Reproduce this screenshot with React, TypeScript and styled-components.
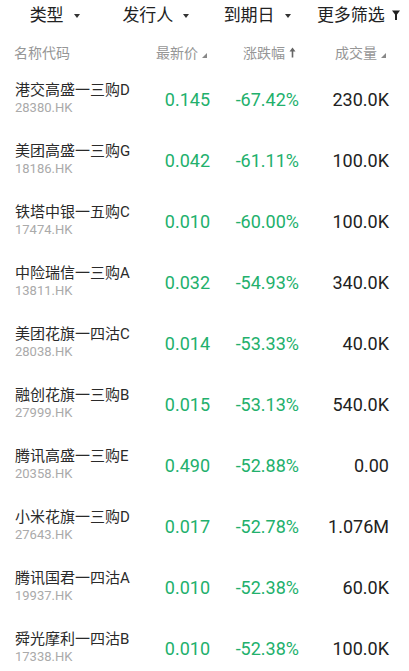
import styled, { createGlobalStyle } from 'styled-components'

interface Bond {
  name: string
  code: string
  price: string
  change: string
  volume: string
}

const BONDS: Bond[] = [
  { name: '港交高盛一三购D', code: '28380.HK', price: '0.145', change: '-67.42%', volume: '230.0K' },
  { name: '美团高盛一三购G', code: '18186.HK', price: '0.042', change: '-61.11%', volume: '100.0K' },
  { name: '铁塔中银一五购C', code: '17474.HK', price: '0.010', change: '-60.00%', volume: '100.0K' },
  { name: '中险瑞信一三购A', code: '13811.HK', price: '0.032', change: '-54.93%', volume: '340.0K' },
  { name: '美团花旗一四沽C', code: '28038.HK', price: '0.014', change: '-53.33%', volume: '40.0K' },
  { name: '融创花旗一三购B', code: '27999.HK', price: '0.015', change: '-53.13%', volume: '540.0K' },
  { name: '腾讯高盛一三购E', code: '20358.HK', price: '0.490', change: '-52.88%', volume: '0.00' },
  { name: '小米花旗一三购D', code: '27643.HK', price: '0.017', change: '-52.78%', volume: '1.076M' },
  { name: '腾讯国君一四沽A', code: '19937.HK', price: '0.010', change: '-52.38%', volume: '60.0K' },
  { name: '舜光摩利一四沽B', code: '17338.HK', price: '0.010', change: '-52.38%', volume: '100.0K' },
]

const FILTERS = ['类型', '发行人', '到期日']

const GlobalStyle = createGlobalStyle`
  html, body {
    margin: 0;
    padding: 0;
    background: #fff;
    overflow: hidden;
  }
  body {
    font-family: Roboto, 'Noto Sans CJK SC', sans-serif;
    -webkit-font-smoothing: antialiased;
  }
`

const Page = styled.div`
  width: 409px;
  height: 671px;
  overflow: hidden;
  background: #fff;
`

const FilterBar = styled.div`
  display: grid;
  grid-template-columns: repeat(4, 1fr);
  height: 31px;
  padding-left: 4px;
  align-items: center;
`

const FilterItem = styled.div<{ $gap?: number }>`
  display: flex;
  align-items: center;
  justify-content: center;
  gap: ${p => p.$gap ?? 10}px;
  font-size: 17px;
  color: #222;
  line-height: 1;
`

const Caret = styled.span`
  width: 0;
  height: 0;
  border-left: 3px solid transparent;
  border-right: 3px solid transparent;
  border-top: 4px solid #333;
`

const grid = `
  display: grid;
  grid-template-columns: 1fr 60px 89px 90px;
  padding: 0 20px 0 15px;
`

const HeaderRow = styled.div`
  ${grid}
  height: 42px;
  align-items: center;
  font-size: 14px;
  color: #969696;
`

const HeaderCell = styled.div<{ $right?: boolean }>`
  display: flex;
  align-items: center;
  justify-content: ${p => (p.$right ? 'flex-end' : 'flex-start')};
  gap: 4px;
  padding-right: ${p => (p.$right ? '3px' : '0')};
  margin-left: ${p => (p.$right ? '0' : '-1px')};
`

const SortCorner = styled.span`
  width: 0;
  height: 0;
  margin-top: 6px;
  border-left: 5px solid transparent;
  border-bottom: 5px solid #888;
`

const Row = styled.div`
  ${grid}
  height: 61px;
  align-items: start;
`

const NameCell = styled.div`
  display: flex;
  flex-direction: column;
  padding-top: 7px;
  white-space: nowrap;
`

const Name = styled.span`
  font-size: 15px;
  line-height: 20px;
  color: #2a2a2a;
`

const Code = styled.span`
  font-size: 13px;
  line-height: 15px;
  color: #aaa;
`

const Value = styled.div<{ $green?: boolean }>`
  text-align: right;
  font-size: 18px;
  line-height: 18px;
  padding-top: 18px;
  white-space: nowrap;
  color: ${p => (p.$green ? '#22b06c' : '#222')};
`

const UpArrow = () => (
  <svg width="7" height="11" viewBox="0 0 7 11">
    <path d="M3.5 0.5 L6.5 4.5 H4.3 V10.5 H2.7 V4.5 H0.5 Z" fill="#666" />
  </svg>
)

const Funnel = () => (
  <svg width="8" height="11" viewBox="0 0 8 11">
    <path d="M0 0.5 H8 L5 4.5 V10 H3 V4.5 Z" fill="#222" />
  </svg>
)

export default function App() {
  return (
    <Page>
      <GlobalStyle />
      <FilterBar>
        {FILTERS.map(f => (
          <FilterItem key={f}>
            {f}
            <Caret />
          </FilterItem>
        ))}
        <FilterItem $gap={7}>
          更多筛选
          <Funnel />
        </FilterItem>
      </FilterBar>
      <HeaderRow>
        <HeaderCell>名称代码</HeaderCell>
        <HeaderCell $right>
          最新价
          <SortCorner />
        </HeaderCell>
        <HeaderCell $right>
          涨跌幅
          <UpArrow />
        </HeaderCell>
        <HeaderCell $right>
          成交量
          <SortCorner />
        </HeaderCell>
      </HeaderRow>
      {BONDS.map(b => (
        <Row key={b.code}>
          <NameCell>
            <Name>{b.name}</Name>
            <Code>{b.code}</Code>
          </NameCell>
          <Value $green>{b.price}</Value>
          <Value $green>{b.change}</Value>
          <Value>{b.volume}</Value>
        </Row>
      ))}
    </Page>
  )
}
